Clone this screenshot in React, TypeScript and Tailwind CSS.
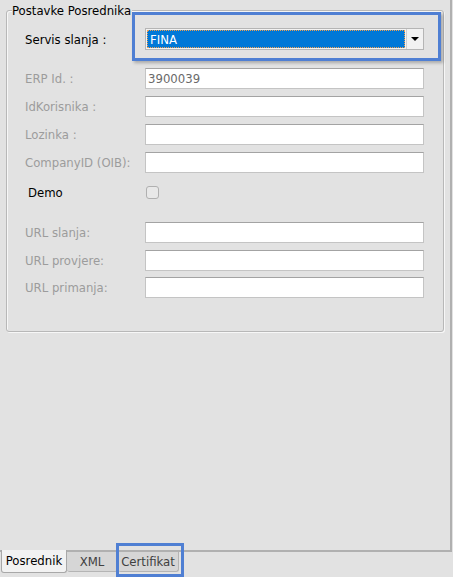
import React from 'react'

const labelCls = 'text-[13px] text-[#9c9c9c] leading-none'
const inputCls =
  'h-[21px] w-[279px] bg-white border border-[#c4c4c4] border-t-[#a3a3a3] px-[2px] text-[13px] text-[#6a6a6a] flex items-center'

const Row: React.FC<{ label: string; value?: string; mt?: string }> = ({ label, value, mt }) => (
  <div className={`flex items-center h-[21px] ${mt ?? 'mt-[7px]'}`}>
    <div className={`w-[120px] ${labelCls}`}>{label}</div>
    <div className={inputCls}>{value}</div>
  </div>
)

export default function App() {
  return (
    <div
      className="relative w-[453px] h-[577px] bg-[#e2e2e2] overflow-hidden"
      style={{ fontFamily: '"DejaVu Sans Condensed", "Liberation Sans", sans-serif' }}
    >
      {/* page area */}
      <div className="h-[552px] w-[452px] border-r-2 border-b-2 border-[#b0b0b0] pl-[6px] pt-[10px]">
        <div className="relative w-[438px] h-[322px] border border-[#b8b8b8] rounded-[3px] shadow-[inset_1px_1px_0_#f7f7f7,1px_1px_0_#f7f7f7] pl-[18px] pt-[17px]">
          <div className="absolute left-[5px] -top-[8px] bg-[#e2e2e2] pr-[1px] text-[13px] leading-[15px] text-black">
            Postavke Posrednika
          </div>

          {/* combo */}
          <div className="flex items-center h-[22px]">
            <div className="w-[120px] text-[13px] text-black leading-none">Servis slanja :</div>
            <div className="h-[22px] w-[279px] bg-[#f2f2f2] border border-[#b5b5b5] flex items-stretch">
              <div className="flex-1 m-[1px] bg-[#0078d7] border border-dotted border-[#f0a050] text-white text-[13px] leading-none flex items-center pl-[2px]">
                FINA
              </div>
              <div className="w-[17px] flex items-center justify-center border-l border-[#d0d0d0]">
                <div className="w-0 h-0 border-l-[4px] border-r-[4px] border-t-[4px] border-l-transparent border-r-transparent border-t-black" />
              </div>
            </div>
          </div>

          <Row label="ERP Id. :" value="3900039" mt="mt-[18px]" />
          <Row label="IdKorisnika :" />
          <Row label="Lozinka :" />
          <Row label="CompanyID (OIB):" />

          <div className="flex items-center h-[14px] mt-[12px]">
            <div className="w-[120px] pl-[3px] text-[13px] text-black leading-none">Demo</div>
            <div className="w-[13px] h-[13px] rounded-[3px] border border-[#b0b0b0] bg-[#e8e8e8] ml-[1px]" />
          </div>

          <Row label="URL slanja:" mt="mt-[23px]" />
          <Row label="URL provjere:" />
          <Row label="URL primanja:" mt="mt-[6px]" />
        </div>
      </div>

      {/* tabs */}
      <div className="flex items-start -mt-[2px] pl-[1px]">
        <div className="h-[23px] w-[66px] bg-[#f2f2f2] border border-t-0 border-[#a8a8a8] rounded-b-[3px] text-[13px] text-black flex items-center justify-center">
          Posrednik
        </div>
        <div className="h-[20px] mt-[2px] w-[51px] bg-[#d6d6d6] border border-t-0 border-l-0 border-[#b4b4b4] rounded-b-[3px] text-[13px] text-[#404040] flex items-center justify-center">
          XML
        </div>
        <div className="h-[20px] mt-[2px] w-[61px] bg-[#d6d6d6] border border-t-0 border-l-0 border-[#b4b4b4] rounded-b-[3px] text-[13px] text-[#404040] flex items-center justify-center">
          Certifikat
        </div>
      </div>

      {/* highlight overlays */}
      <div className="absolute left-[132px] top-[12px] w-[309px] h-[49px] border-[3px] border-[#4f7fd3] shadow-[2px_2px_3px_rgba(0,0,0,0.25)]" />
      <div className="absolute left-[116px] top-[543px] w-[68px] h-[34px] border-[3px] border-[#4f7fd3]" />
    </div>
  )
}
